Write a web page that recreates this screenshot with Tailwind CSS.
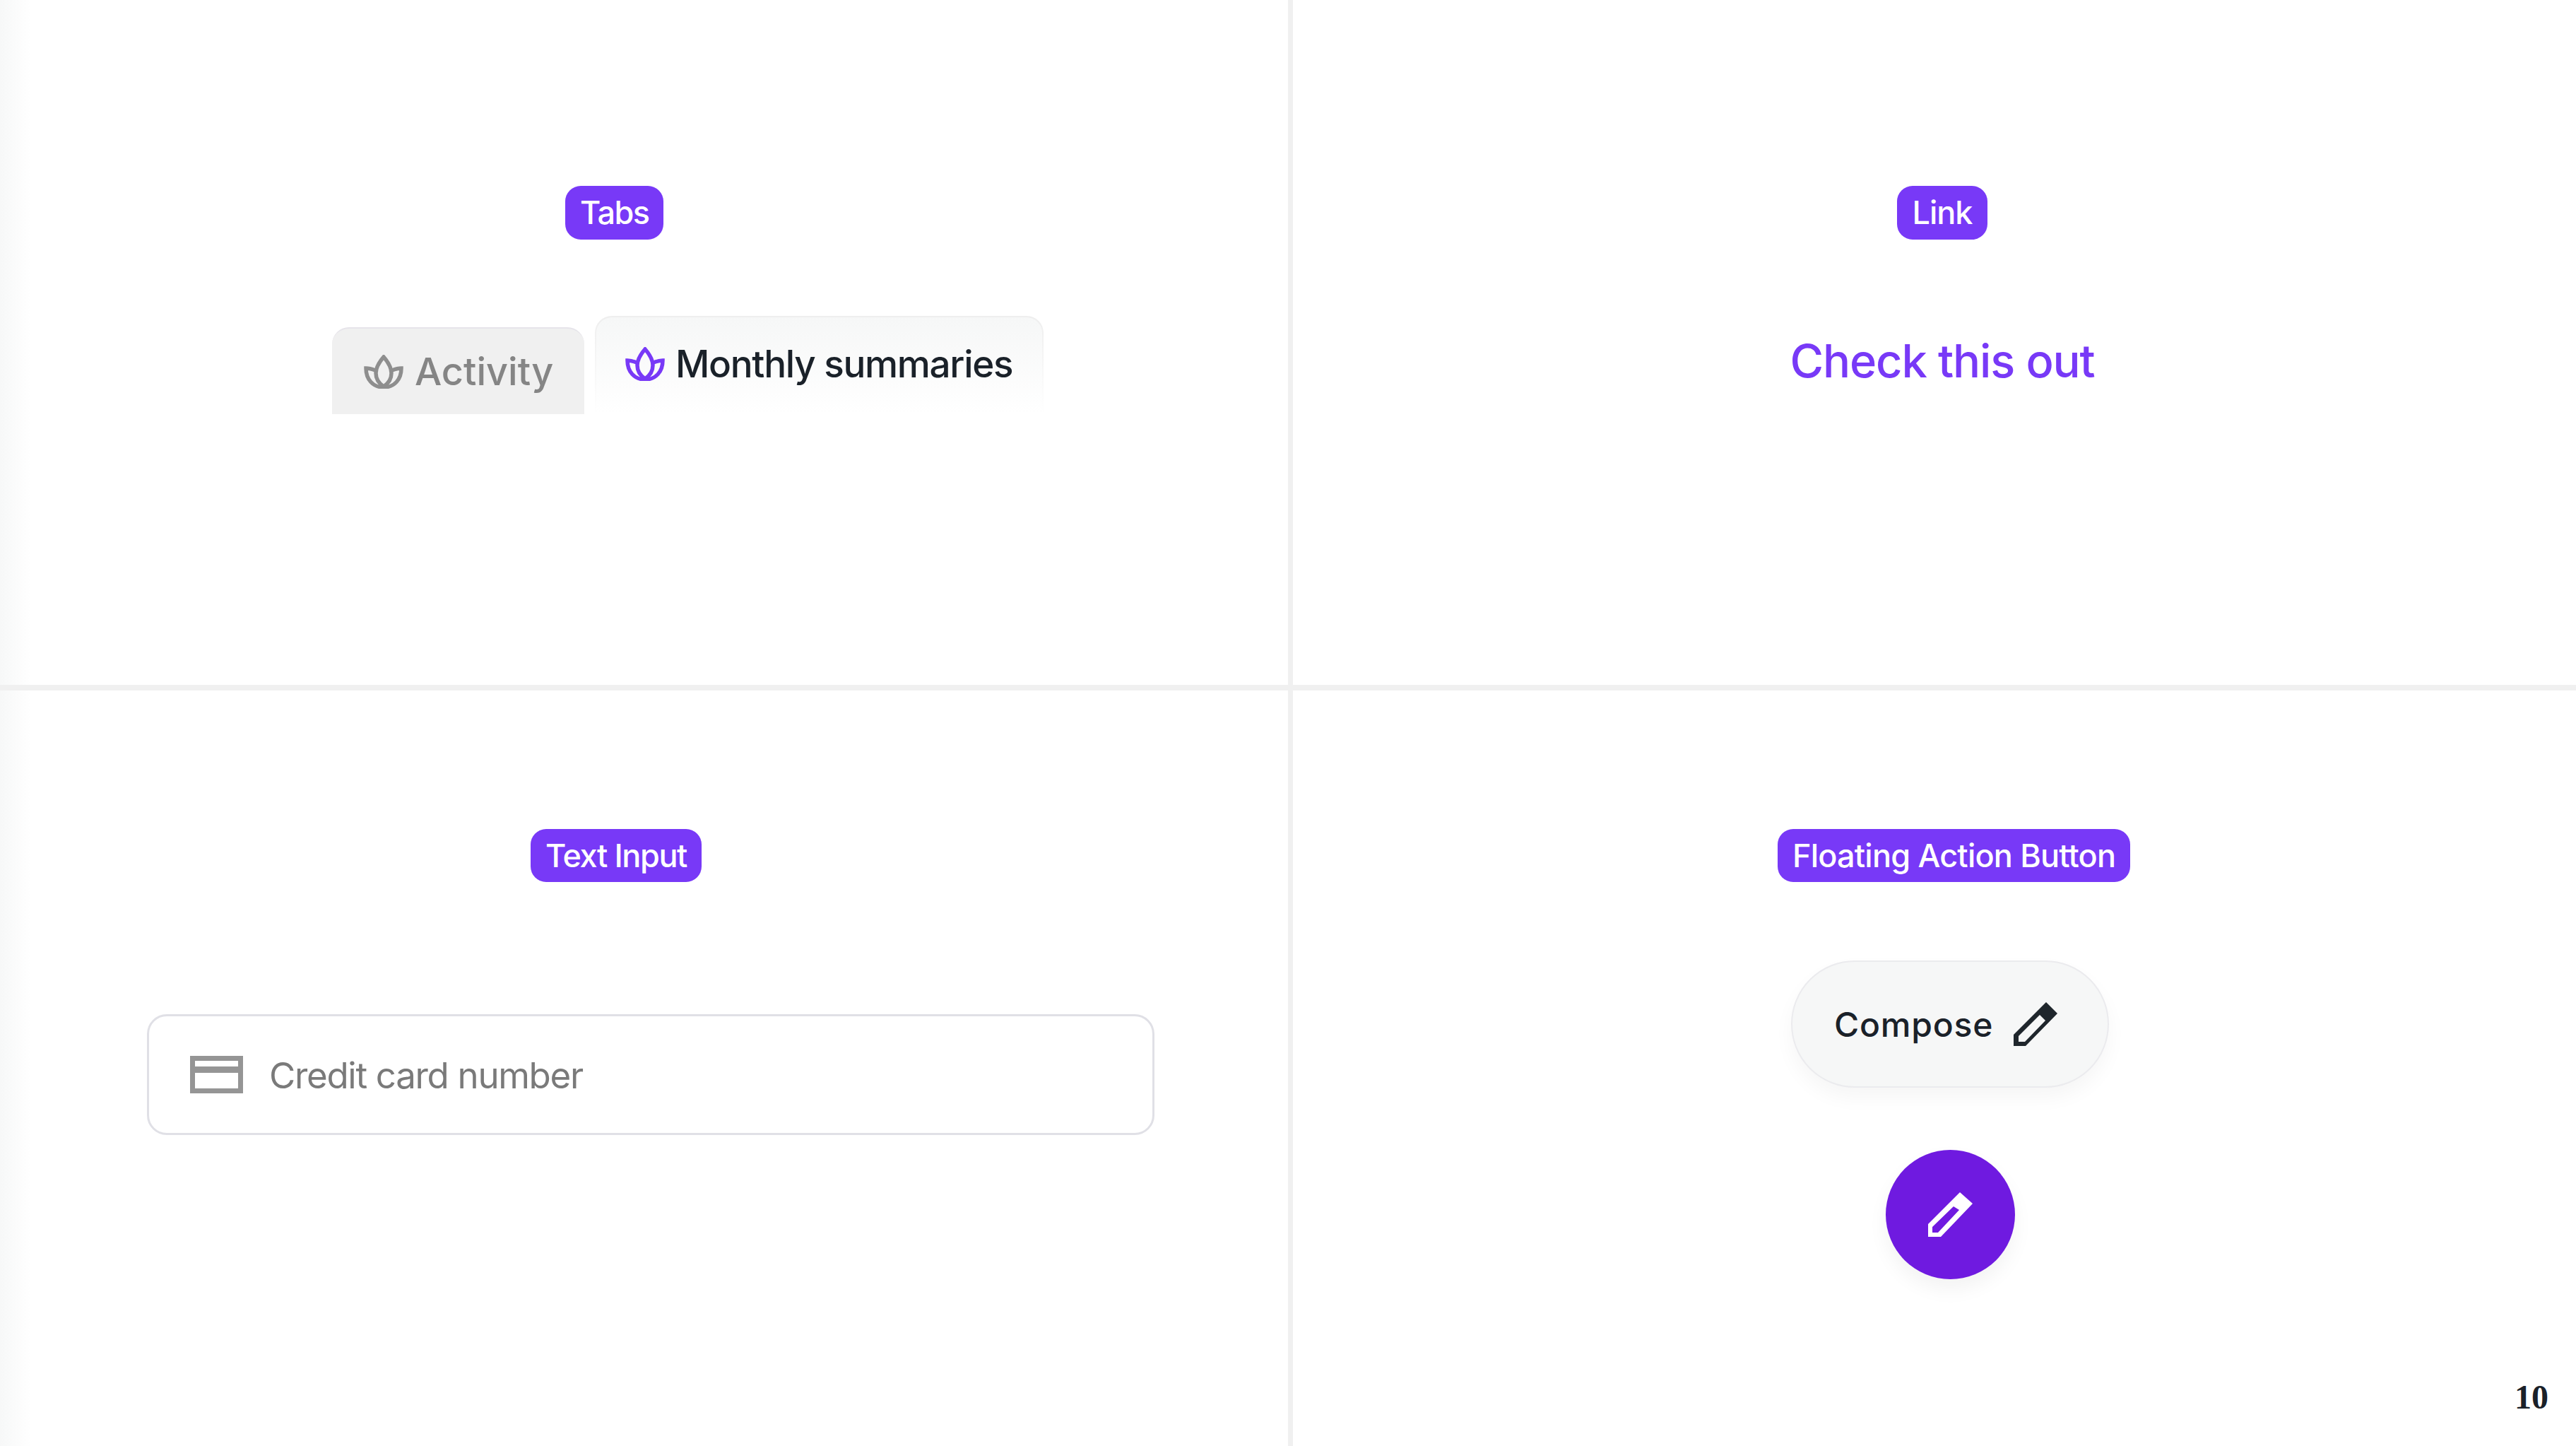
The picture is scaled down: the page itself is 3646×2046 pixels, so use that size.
<!DOCTYPE html>
<html lang="en">
<head>
    <meta charset="UTF-8">
    <title>Components</title>
    <script src="https://cdn.jsdelivr.net/npm/@tailwindcss/browser@4"></script>
</head>
<body class="bg-white font-['Inter',sans-serif]">
    <div class="relative w-[3646px] h-[2046px] overflow-hidden grid grid-cols-[1823px_7px_1fr] grid-rows-[969px_8px_1fr]">
        <!-- Tabs -->
        <section class="pt-[263px] pl-[470px]">
            <span class="ml-[330px] inline-block h-[76px] leading-[76px] px-[21px] rounded-[22px] bg-[#7839f7] text-white text-[45px] font-medium tracking-[-1.6px]">Tabs</span>
            <div class="mt-[105px] flex items-end gap-[15px] h-[142px]">
                <div class="w-[357px] h-[123px] rounded-t-[24px] bg-[#f0f0f0] border-t-2 border-[#e6e4ea] flex items-center pl-[45px] gap-[16px] text-[54px] font-medium tracking-[0px] text-[#858585]">
                    <svg class="w-[56px] h-[48px]" viewBox="0 0 56 48" fill="none" stroke="#8e8e8e" stroke-width="5.5"><path d="M28 3C22 10 17 18 17 26C17 35 22 41 28 45C34 41 39 35 39 26C39 18 34 10 28 3Z"/><path d="M16 22C11 20 7 19 3 19C3 35 13 46 28 46C43 46 53 35 53 19C49 19 45 20 40 22"/></svg>
                    Activity
                </div>
                <div class="w-[635px] h-[139px] rounded-t-[24px] bg-linear-to-b from-[#eeeeee] to-white p-[2px] pb-0">
                    <div class="h-full rounded-t-[22px] bg-linear-to-b from-[#f6f7f7] to-white flex items-center pl-[41px] pb-[4px] gap-[15px] text-[53px] font-medium tracking-[-1.3px] text-[#1a2129]">
                        <svg class="w-[56px] h-[48px] -mt-[2px]" viewBox="0 0 56 48" fill="none" stroke="#7839f7" stroke-width="5.5"><path d="M28 3C22 10 17 18 17 26C17 35 22 41 28 45C34 41 39 35 39 26C39 18 34 10 28 3Z"/><path d="M16 22C11 20 7 19 3 19C3 35 13 46 28 46C43 46 53 35 53 19C49 19 45 20 40 22"/></svg>
                        Monthly summaries
                    </div>
                </div>
            </div>
        </section>
        <div class="relative bg-[#f0f0f0]"></div>
        <!-- Link -->
        <section class="pt-[263px] flex flex-col items-center pl-[22px]">
            <span class="h-[76px] leading-[76px] px-[21px] rounded-[22px] bg-[#7839f7] text-white text-[45px] font-medium tracking-[-1px]">Link</span>
            <a class="mt-[132px] text-[#7839f7] text-[65px] font-medium leading-[80px] tracking-[-1.1px]">Check this out</a>
        </section>

        <div class="relative col-span-3 bg-[#f0f0f0]"></div>

        <!-- Text input -->
        <section class="pt-[196px] pl-[208px]">
            <span class="ml-[543px] inline-block h-[75px] leading-[75px] px-[21px] rounded-[22px] bg-[#7839f7] text-white text-[45px] font-medium tracking-[-1.4px]">Text Input</span>
            <div class="mt-[187px] w-[1426px] h-[171px] rounded-[28px] border-[3px] border-[#e0e0e6] flex items-center pl-[58px] gap-[37px] text-[51px] tracking-[-1.3px] text-[#7a7a7a]">
                <svg class="w-[75px] h-[53px]" viewBox="0 0 75 53" fill="none"><path fill="#959595" fill-rule="evenodd" d="M0 0H75V53H0ZM7 7V15H68V7ZM7 24V46H68V24Z"/></svg>
                <span class="mt-[3px]">Credit card number</span>
            </div>
        </section>
        <div class="relative bg-[#f0f0f0]"></div>
        <!-- Floating action button -->
        <section class="pt-[196px] pl-[686px]">
            <span class="inline-block h-[75px] leading-[75px] px-[21px] rounded-[22px] bg-[#7839f7] text-white text-[45px] font-medium tracking-[-0.8px]">Floating Action Button</span>
            <div class="mt-[111px] ml-[19px] w-[450px] h-[180px] rounded-full bg-[#f6f7f7] border-2 border-[#ebebee] shadow-[0_14px_28px_rgba(0,0,0,0.04)] flex items-center pl-[59px] gap-[29px] text-[48px] font-medium tracking-[0.8px] text-[#1a2129]">
                <span class="mt-[2px]">Compose</span>
                <svg class="w-[62px] h-[62px]" viewBox="0 0 62 62"><path fill="#1f262c" fill-rule="evenodd" d="M0 62V46L46 0L62 16L17 62ZM7 56H16L45 26L37 18L7 48Z"/></svg>
            </div>
            <div class="mt-[88px] ml-[153px] w-[183px] h-[183px] rounded-full bg-[#6f1ae0] shadow-[0_14px_28px_rgba(0,0,0,0.05)] flex items-center justify-center">
                <svg class="w-[63px] h-[63px]" viewBox="0 0 63 63"><path fill="#ffffff" fill-rule="evenodd" d="M0 63V45L45 0L63 16L18 63ZM6 57H14L44 25L36 20L6 49Z"/></svg>
            </div>
        </section>

        <!-- left edge fade + page number -->
        <div class="absolute inset-y-0 left-0 w-[44px] bg-linear-to-r from-[#f7f8f8] to-transparent"></div>
        <div class="absolute left-0 top-[969px] h-[8px] w-[44px] bg-[#f0f0f0]"></div>
        <span class="absolute right-[39px] top-[1950px] font-['Liberation_Serif',serif] font-bold text-[48px] leading-[54px] text-[#1a2129]">10</span>
    </div>
</body>
</html>
